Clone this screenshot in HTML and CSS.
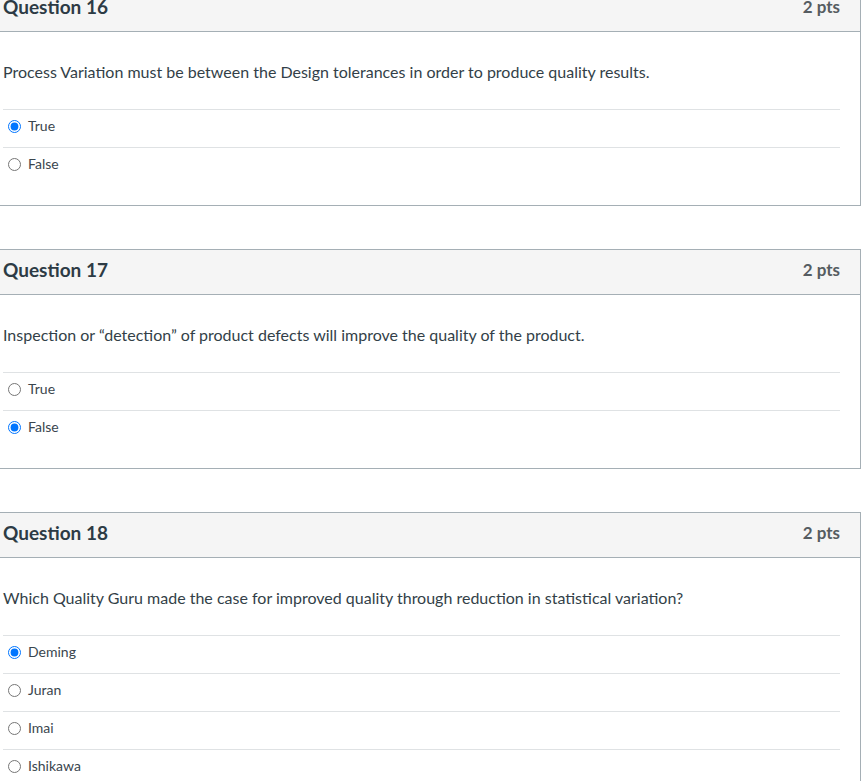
FILE: index.html
```html
<!DOCTYPE html>
<html>
<head>
<meta charset="utf-8">
<link rel="stylesheet" href="styles.css">
</head>
<body>
<div class="quiz">
  <div class="card first">
    <div class="header"><span class="title">Question 16</span><span class="pts">2 pts</span></div>
    <div class="body">
      <div class="qtext">Process Variation must be between the Design tolerances in order to produce quality results.</div>
      <div class="answers">
        <label class="answer"><input type="radio" name="q16" checked><span>True</span></label>
        <label class="answer"><input type="radio" name="q16"><span>False</span></label>
      </div>
    </div>
  </div>
  <div class="card">
    <div class="header"><span class="title">Question 17</span><span class="pts">2 pts</span></div>
    <div class="body">
      <div class="qtext">Inspection or “detection” of product defects will improve the quality of the product.</div>
      <div class="answers">
        <label class="answer"><input type="radio" name="q17"><span>True</span></label>
        <label class="answer"><input type="radio" name="q17" checked><span>False</span></label>
      </div>
    </div>
  </div>
  <div class="card">
    <div class="header"><span class="title">Question 18</span><span class="pts">2 pts</span></div>
    <div class="body">
      <div class="qtext">Which Quality Guru made the case for improved quality through reduction in statistical variation?</div>
      <div class="answers">
        <label class="answer"><input type="radio" name="q18" checked><span>Deming</span></label>
        <label class="answer"><input type="radio" name="q18"><span>Juran</span></label>
        <label class="answer"><input type="radio" name="q18"><span>Imai</span></label>
        <label class="answer"><input type="radio" name="q18"><span>Ishikawa</span></label>
      </div>
    </div>
  </div>
</div>
</body>
</html>
```

FILE: styles.css
```css
html, body {
  margin: 0;
  padding: 0;
  background: #fff;
}
body {
  font-family: Lato, "Open Sans", sans-serif;
  color: #2d3b45;
  overflow: hidden;
}
.quiz {
  width: 861px;
}
.card {
  border: 1px solid #a5afb5;
  border-left: none;
  margin-bottom: 43px;
  background: #fff;
}
.card.first {
  margin-top: -14px;
}
.header {
  height: 39px;
  background: #f5f5f5;
  border-bottom: 1px solid #a5afb5;
  display: flex;
  align-items: center;
  justify-content: space-between;
  padding: 0 20px 5px 3px;
}
.title {
  font-size: 19px;
  font-weight: 700;
  color: #2d3b45;
}
.pts {
  font-size: 17px;
  font-weight: 700;
  color: #555c61;
}
.body {
  padding: 28px 20px 20px 3px;
}
.qtext {
  font-size: 16px;
  line-height: 24px;
  margin-bottom: 25px;
  color: #333f48;
}
.answer {
  display: flex;
  align-items: center;
  height: 31px;
  padding-bottom: 6px;
  border-top: 1px solid #dfe2e4;
  font-size: 14px;
  color: #3a464e;
}
.answer input {
  margin: 1px 7px 0 5px;
  width: 13px;
  height: 13px;
}
.answer span {
  line-height: 18px;
}
```
